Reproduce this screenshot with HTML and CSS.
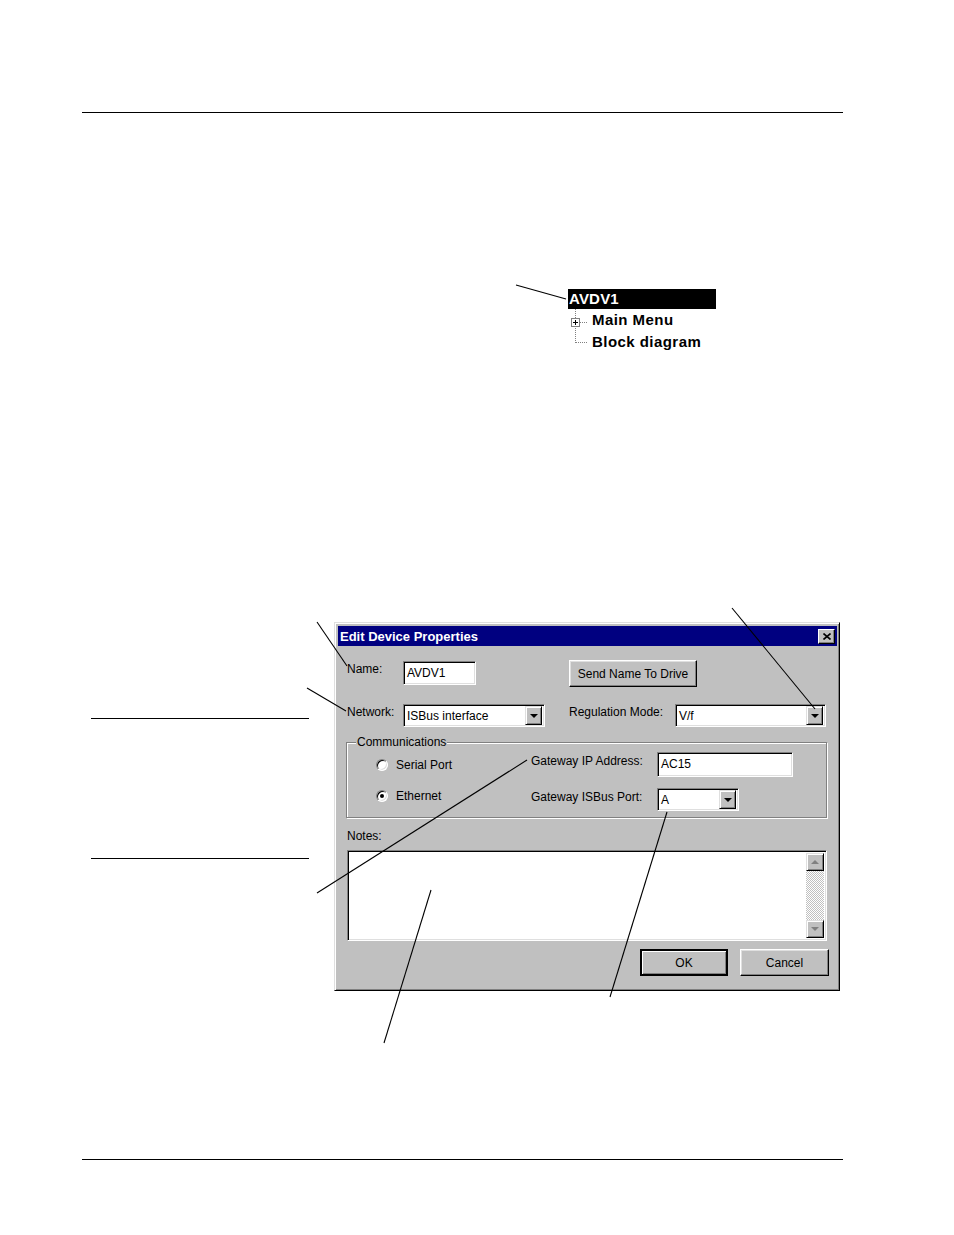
FILE: index.html
```html
<!DOCTYPE html>
<html>
<head>
  <title>Edit Device Properties</title>
  <link rel="stylesheet" href="styles.css">
</head>
<body>
  <div class="page">
    <div class="rule"></div>

    <div class="tree">
      <div class="tree-root">AVDV1</div>
      <div class="tree-children">
        <svg class="twigs" width="24" height="44" viewBox="0 0 24 44">
          <line x1="7.5" y1="0" x2="7.5" y2="9" stroke="#808080" stroke-dasharray="1 1"/>
          <line x1="7.5" y1="17" x2="7.5" y2="34" stroke="#808080" stroke-dasharray="1 1"/>
          <line x1="12" y1="13.5" x2="19" y2="13.5" stroke="#808080" stroke-dasharray="1 1"/>
          <line x1="8" y1="33.5" x2="19" y2="33.5" stroke="#808080" stroke-dasharray="1 1"/>
          <rect x="3.5" y="9.5" width="8" height="8" fill="#fff" stroke="#808080"/>
          <line x1="5" y1="13.5" x2="10" y2="13.5" stroke="#000"/>
          <line x1="7.5" y1="11" x2="7.5" y2="16" stroke="#000"/>
        </svg>
        <div class="tree-labels">
          <div class="tree-item">Main Menu</div>
          <div class="tree-item">Block diagram</div>
        </div>
      </div>
    </div>

    <div class="dialog">
      <div class="titlebar">
        <span class="title">Edit Device Properties</span>
        <span class="close">
          <svg width="8" height="7" viewBox="0 0 8 7">
            <path d="M0.5 0.5 L7.5 6.5 M7.5 0.5 L0.5 6.5" stroke="#000" stroke-width="1.6"/>
          </svg>
        </span>
      </div>

      <div class="dialog-body">
        <div class="top-grid">
          <div class="label label-name">Name:</div>
          <div class="field"><div class="edit edit-name">AVDV1</div></div>
          <div class="send"><div class="button button-send">Send Name To Drive</div></div>

          <div class="label label-row2">Network:</div>
          <div class="field">
            <div class="edit combo combo-network">
              <span class="combo-text">ISBus interface</span>
              <span class="combo-btn"><span class="tri"></span></span>
            </div>
          </div>
          <div class="label label-row2">Regulation Mode:</div>
          <div class="field">
            <div class="edit combo combo-mode">
              <span class="combo-text">V/f</span>
              <span class="combo-btn"><span class="tri"></span></span>
            </div>
          </div>
        </div>

        <fieldset class="group">
          <legend>Communications</legend>
          <div class="group-grid">
            <div class="radio-item r1"><span class="radio"></span>Serial Port</div>
            <div class="label g1">Gateway IP Address:</div>
            <div class="field"><div class="edit edit-ip">AC15</div></div>

            <div class="radio-item r2"><span class="radio checked"></span>Ethernet</div>
            <div class="label g2">Gateway ISBus Port:</div>
            <div class="field">
              <div class="edit combo combo-port">
                <span class="combo-text">A</span>
                <span class="combo-btn"><span class="tri"></span></span>
              </div>
            </div>
          </div>
        </fieldset>

        <div class="label notes-label">Notes:</div>
        <div class="edit notes">
          <div class="notes-text"></div>
          <div class="scrollbar">
            <span class="sb-btn"><span class="tri tri-up"></span></span>
            <span class="sb-track"></span>
            <span class="sb-btn"><span class="tri tri-down"></span></span>
          </div>
        </div>

        <div class="actions">
          <div class="button button-default">OK</div>
          <div class="button button-cancel">Cancel</div>
        </div>
      </div>
    </div>

    <div class="rule rule-foot"></div>

    <svg class="callouts" width="954" height="1235" viewBox="0 0 954 1235">
      <g stroke="#000" stroke-width="1.1" fill="none">
        <line x1="516" y1="285" x2="566" y2="299"/>
        <line x1="317" y1="622" x2="347" y2="666"/>
        <line x1="307" y1="688" x2="346" y2="711"/>
        <line x1="91" y1="718.5" x2="309" y2="718.5"/>
        <line x1="91" y1="858.5" x2="309" y2="858.5"/>
        <line x1="317" y1="893" x2="527" y2="760"/>
        <line x1="384" y1="1043" x2="431" y2="890"/>
        <line x1="610" y1="997" x2="667" y2="812"/>
        <line x1="732" y1="608" x2="815" y2="709"/>
      </g>
    </svg>
  </div>
</body>
</html>
```

FILE: styles.css
```css
body {
  margin: 0;
  background-color: #fff;
  font-family: "Liberation Sans", Arial, sans-serif;
}

.page {
  position: relative;
  width: 954px;
  height: 1235px;
  padding-top: 112px;
  box-sizing: border-box;
  overflow: hidden;
}

.rule {
  margin-left: 82px;
  width: 761px;
  height: 1px;
  background-color: #000;
}

.rule-foot {
  margin-top: 168px;
}

/* tree */

.tree {
  margin-top: 176px;
  margin-left: 568px;
}

.tree-root {
  width: 147px;
  height: 20px;
  padding-left: 1px;
  background-color: #000;
  color: #fff;
  font-weight: bold;
  font-size: 15px;
  line-height: 20px;
  letter-spacing: 0.2px;
}

.tree-children {
  display: flex;
  height: 44px;
}

.twigs {
  display: block;
}

.tree-item {
  height: 22px;
  line-height: 22px;
  font-weight: bold;
  font-size: 15px;
  letter-spacing: 0.45px;
}

/* dialog */

.dialog {
  margin-top: 269px;
  margin-left: 334px;
  width: 506px;
  height: 369px;
  box-sizing: border-box;
  padding: 3px 2px 2px 3px;
  background-color: #c0c0c0;
  border: 1px solid;
  border-color: #dfdfdf #000 #000 #dfdfdf;
  box-shadow: inset 1px 1px #fff, inset -1px -1px #808080;
  font-size: 12px;
  color: #000;
}

.titlebar {
  display: flex;
  align-items: center;
  justify-content: space-between;
  height: 20px;
  padding: 0 2px 0 2px;
  background-color: #000080;
}

.title {
  color: #fff;
  font-weight: bold;
  font-size: 13px;
}

.close {
  display: flex;
  align-items: center;
  justify-content: center;
  width: 17px;
  height: 15px;
  box-sizing: border-box;
  background-color: #c0c0c0;
  border: 1px solid;
  border-color: #fff #000 #000 #fff;
  box-shadow: inset -1px -1px #808080;
}

.dialog-body {
  padding: 14px 8px 0 9px;
}

.label {
  line-height: 14px;
  white-space: nowrap;
}

.top-grid {
  display: grid;
  grid-template-columns: 56px 166px 106px 151px;
  grid-template-rows: 27px 23px;
  row-gap: 17px;
}

.label-name {
  padding-top: 2px;
}

.label-row2 {
  padding-top: 1px;
}

.send {
  grid-column: 3 / 5;
}

.edit {
  box-sizing: border-box;
  background-color: #fff;
  border: 1px solid;
  border-color: #808080 #fff #fff #808080;
  box-shadow: inset 1px 1px #000, inset -1px -1px #dfdfdf;
  padding: 0 3px;
  white-space: nowrap;
}

.edit-name {
  margin-top: 1px;
  width: 73px;
  height: 24px;
  line-height: 22px;
}

.combo {
  display: flex;
  align-items: center;
  justify-content: space-between;
  height: 23px;
  padding: 0 2px 0 3px;
}

.combo-network {
  width: 142px;
}

.combo-mode {
  width: 151px;
}

.combo-port {
  width: 82px;
}

.combo-btn {
  display: flex;
  align-items: center;
  justify-content: center;
  width: 17px;
  height: 19px;
  box-sizing: border-box;
  background-color: #c0c0c0;
  border: 1px solid;
  border-color: #dfdfdf #000 #000 #dfdfdf;
  box-shadow: inset 1px 1px #fff, inset -1px -1px #808080;
}

.tri {
  width: 0;
  height: 0;
  border-left: 4px solid transparent;
  border-right: 4px solid transparent;
  border-top: 4px solid #000;
}

.tri-up {
  border-top: none;
  border-bottom: 4px solid #808080;
}

.tri-down {
  border-top-color: #808080;
}

.button {
  display: flex;
  align-items: center;
  justify-content: center;
  box-sizing: border-box;
  background-color: #c0c0c0;
  border: 1px solid;
  border-color: #fff #000 #000 #fff;
  box-shadow: inset -1px -1px #808080, inset 1px 1px #dfdfdf;
  white-space: nowrap;
}

.button-send {
  width: 128px;
  height: 27px;
}

/* communications group */

.group {
  margin: 8px 0 0 -1px;
  padding: 0;
  width: 481px;
  box-sizing: border-box;
  border: 1px solid #808080;
  box-shadow: inset 1px 1px #fff, 1px 1px #fff;
}

.group legend {
  margin-left: 9px;
  padding: 0 1px;
  background-color: #c0c0c0;
  line-height: 14px;
}

.group-grid {
  display: grid;
  grid-template-columns: 155px 126px 1fr;
  grid-template-rows: 25px 23px;
  row-gap: 11px;
  padding: 3px 0 6px 29px;
}

.radio-item {
  display: flex;
  align-items: flex-start;
  gap: 8px;
  line-height: 14px;
}

.r1 {
  padding-top: 6px;
}

.r2 {
  padding-top: 1px;
}

.radio {
  position: relative;
  flex: none;
  width: 12px;
  height: 12px;
  margin-top: 1px;
  box-sizing: border-box;
  border-radius: 50%;
  background-color: #fff;
  border: 1px solid;
  border-color: #808080 #fff #fff #808080;
  box-shadow: inset 1px 1px #000, inset -1px -1px #dfdfdf;
}

.radio.checked::after {
  content: "";
  position: absolute;
  left: 3px;
  top: 3px;
  width: 4px;
  height: 4px;
  border-radius: 50%;
  background-color: #000;
}

.g1 {
  padding-top: 2px;
}

.g2 {
  padding-top: 2px;
}

.edit-ip {
  width: 136px;
  height: 25px;
  line-height: 23px;
}

/* notes */

.notes-label {
  margin-top: 11px;
}

.notes {
  display: flex;
  justify-content: space-between;
  margin-top: 7px;
  width: 480px;
  height: 91px;
  padding: 2px;
}

.scrollbar {
  display: flex;
  flex-direction: column;
  width: 18px;
}

.sb-btn {
  display: flex;
  align-items: center;
  justify-content: center;
  height: 18px;
  box-sizing: border-box;
  background-color: #c0c0c0;
  border: 1px solid;
  border-color: #dfdfdf #000 #000 #dfdfdf;
  box-shadow: inset 1px 1px #fff, inset -1px -1px #808080;
}

.sb-track {
  flex: 1;
  background: repeating-conic-gradient(#c0c0c0 0 25%, #fff 0 50%) 0 0 / 2px 2px;
}

.actions {
  display: flex;
  justify-content: flex-end;
  gap: 12px;
  margin-top: 8px;
}

.button-default {
  width: 88px;
  height: 27px;
  border: 2px solid #000;
  box-shadow: inset 1px 1px #fff, inset -1px -1px #808080;
}

.button-cancel {
  width: 89px;
  height: 27px;
}

/* leader lines drawn over the page */

.callouts {
  position: absolute;
  top: 0;
  left: 0;
  pointer-events: none;
}
```
